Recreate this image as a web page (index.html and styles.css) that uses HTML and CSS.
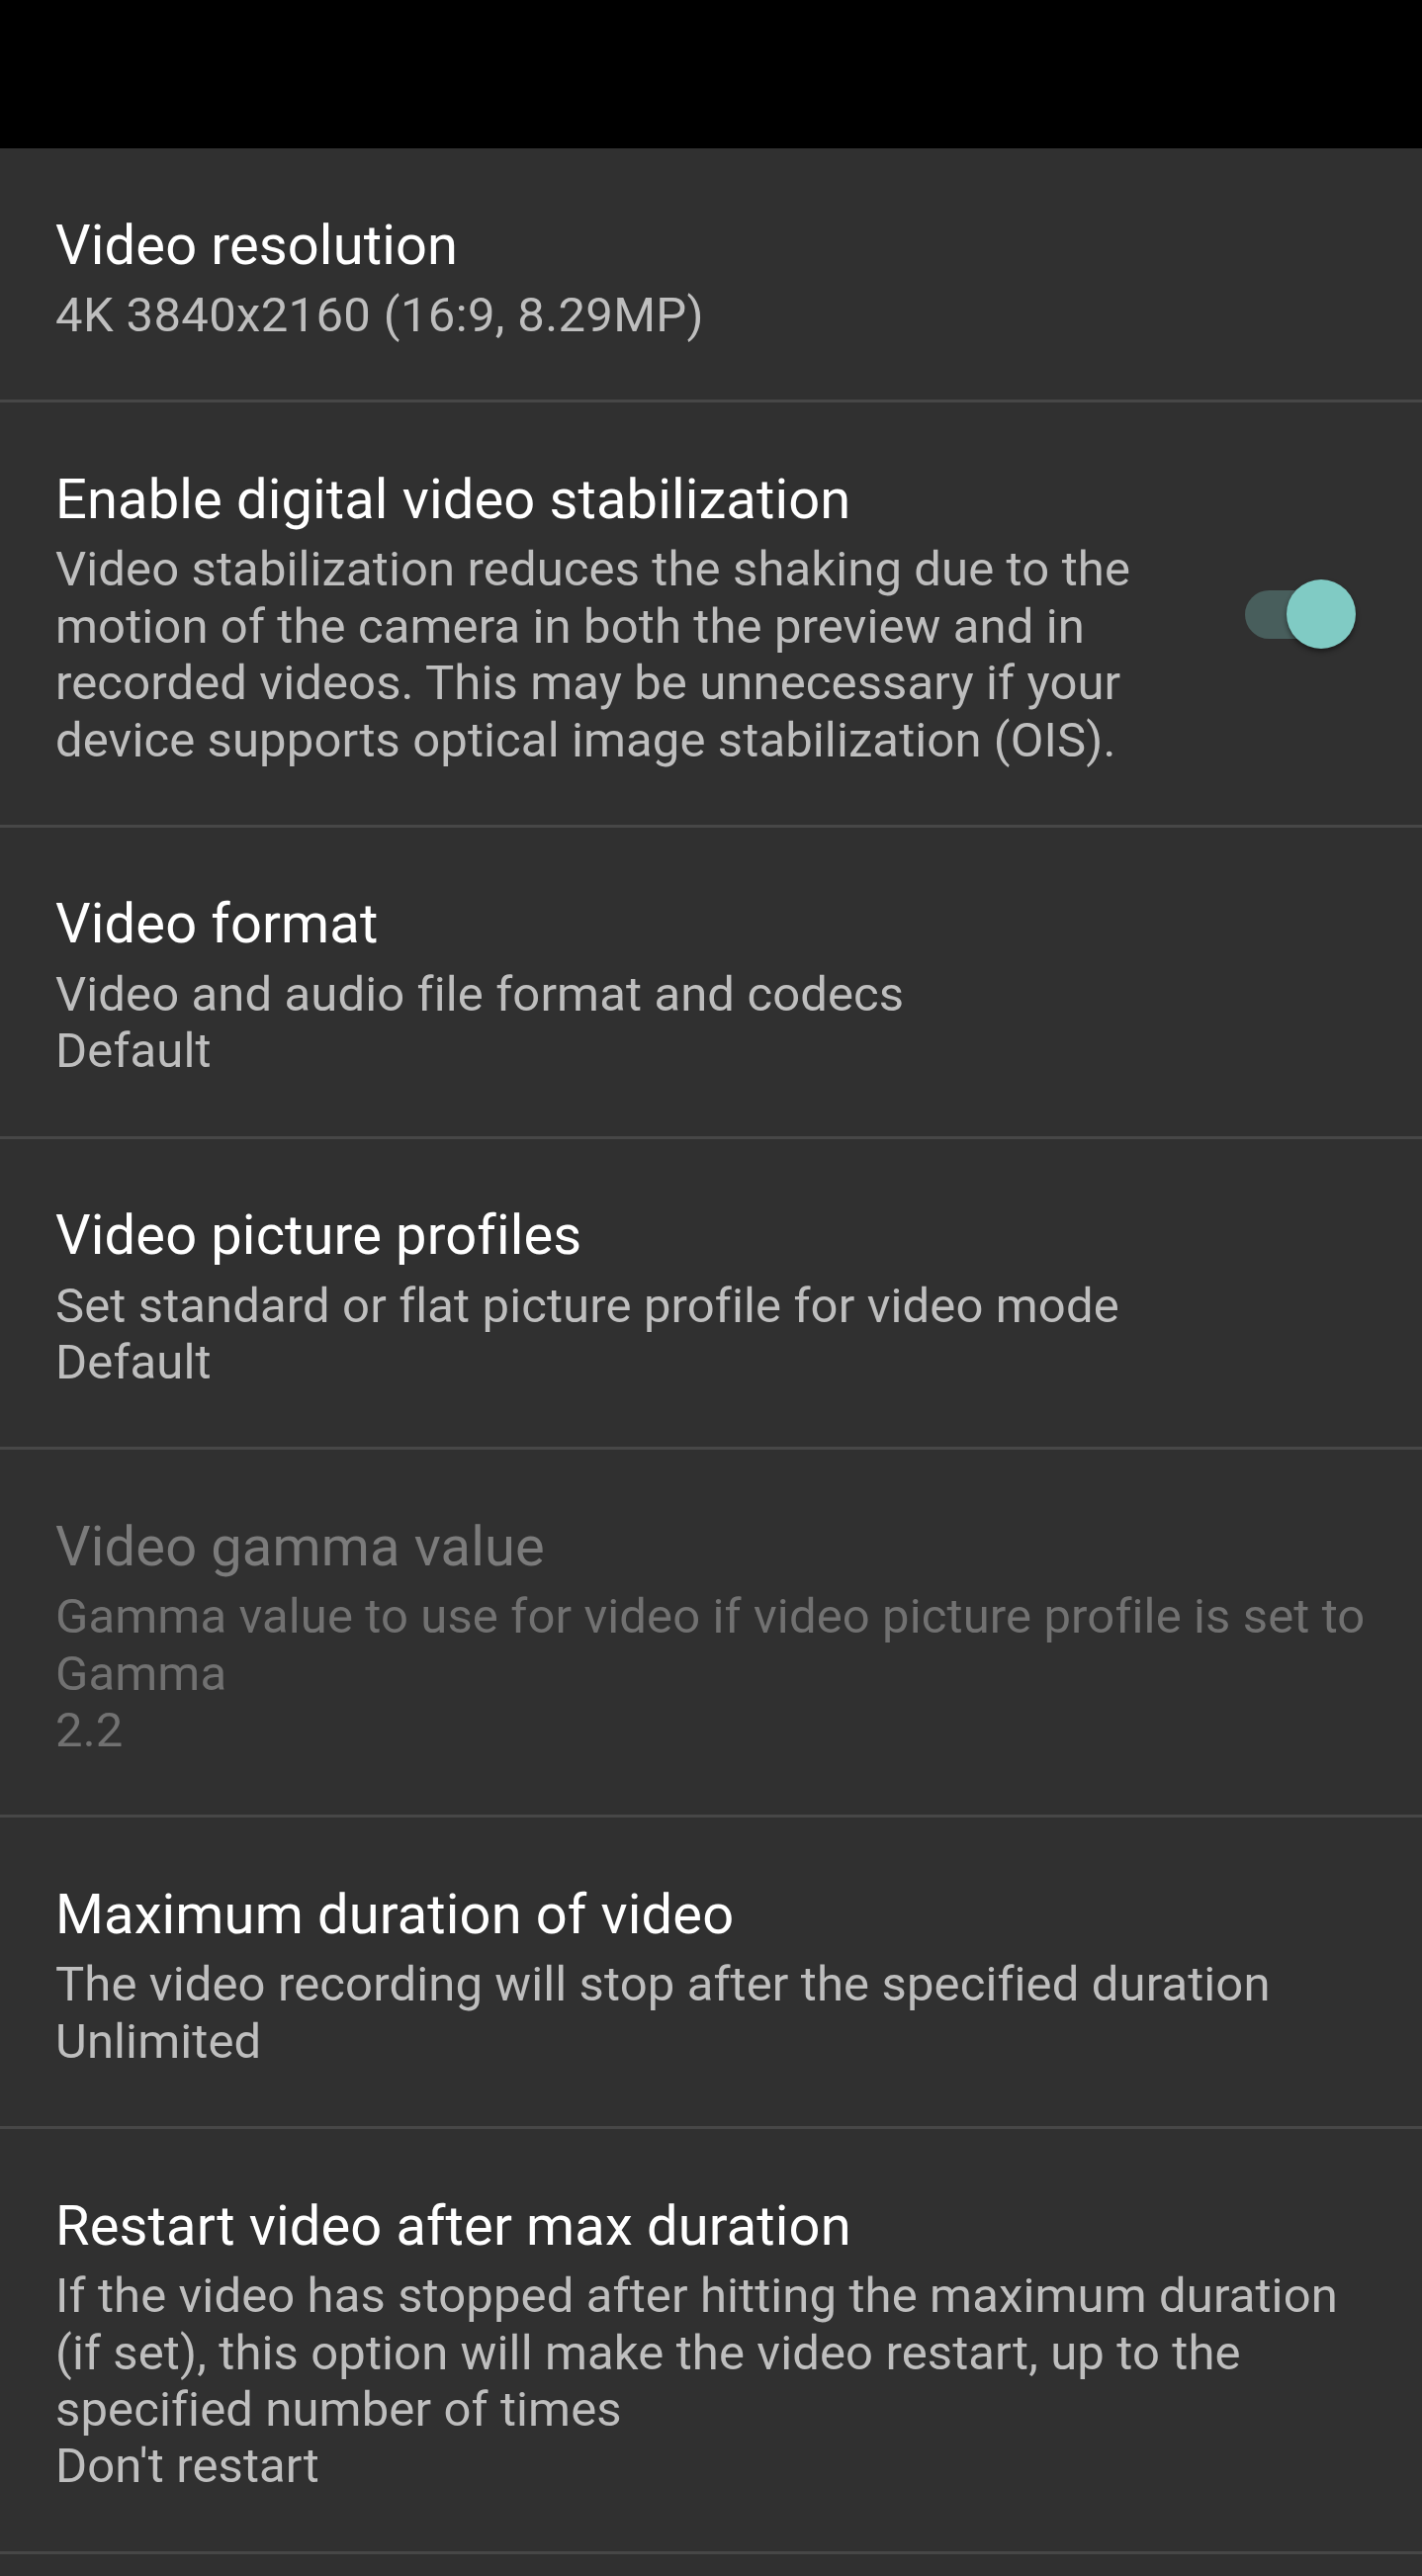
FILE: index.html
```html
<!DOCTYPE html>
<html lang="en">
<head>
<meta charset="utf-8">
<title>Video settings</title>
<link rel="stylesheet" href="styles.css">
</head>
<body>
<div class="status-bar"></div>
<main class="pref-list">
  <div class="pref">
    <div class="pref-text">
      <div class="pref-title">Video resolution</div>
      <div class="pref-summary pref-summary-numeric">4K 3840x2160 (16:9, 8.29MP)</div>
    </div>
  </div>
  <div class="pref">
    <div class="pref-text pref-text-widget">
      <div class="pref-title">Enable digital video stabilization</div>
      <div class="pref-summary">Video stabilization reduces the shaking due to the motion of the camera in both the preview and in recorded videos. This may be unnecessary if your device supports optical image stabilization (OIS).</div>
    </div>
    <div class="switch">
      <div class="switch-track"></div>
      <div class="switch-thumb"></div>
    </div>
  </div>
  <div class="pref">
    <div class="pref-text">
      <div class="pref-title">Video format</div>
      <div class="pref-summary">Video and audio file format and codecs<br>Default</div>
    </div>
  </div>
  <div class="pref">
    <div class="pref-text">
      <div class="pref-title">Video picture profiles</div>
      <div class="pref-summary">Set standard or flat picture profile for video mode<br>Default</div>
    </div>
  </div>
  <div class="pref pref-disabled">
    <div class="pref-text">
      <div class="pref-title">Video gamma value</div>
      <div class="pref-summary">Gamma value to use for video if video picture profile is set to Gamma<br>2.2</div>
    </div>
  </div>
  <div class="pref">
    <div class="pref-text">
      <div class="pref-title">Maximum duration of video</div>
      <div class="pref-summary">The video recording will stop after the specified duration<br>Unlimited</div>
    </div>
  </div>
  <div class="pref">
    <div class="pref-text">
      <div class="pref-title">Restart video after max duration</div>
      <div class="pref-summary">If the video has stopped after hitting the maximum duration (if set), this option will make the video restart, up to the specified number of times<br>Don't restart</div>
    </div>
  </div>
</main>
</body>
</html>
```

FILE: styles.css
```css
html, body {
  margin: 0;
  padding: 0;
  background: #303030;
}

body {
  font-family: Roboto, "Liberation Sans", sans-serif;
  min-height: 2605px;
}

.status-bar {
  height: 150px;
  background: #000000;
}

.pref-list {
  display: flex;
  flex-direction: column;
}

.pref {
  display: flex;
  align-items: center;
  padding: 65.5px 56px 56.8px 56px;
  border-bottom: 3px solid #474747;
}

.pref-text {
  flex: 1;
  min-width: 0;
}

.pref-text-widget {
  margin-right: 60px;
}

.pref-title {
  font-size: 56px;
  line-height: 65.6px;
  letter-spacing: 0.15px;
  color: #ffffff;
}

.pref-summary {
  margin-top: 9px;
  font-size: 49px;
  line-height: 57.4px;
  letter-spacing: 0.12px;
  color: #bebebe;
}

.pref-summary-numeric {
  letter-spacing: 0.35px;
}

.pref-disabled .pref-title {
  color: #7b7b7b;
}

.pref-disabled .pref-summary {
  color: #717171;
}

.switch {
  position: relative;
  flex: none;
  width: 112px;
  height: 70px;
  margin-right: 11px;
  margin-bottom: 8px;
}

.switch-track {
  position: absolute;
  left: 0;
  top: 11px;
  width: 101px;
  height: 49px;
  border-radius: 24.5px;
  background: #485e5c;
}

.switch-thumb {
  position: absolute;
  right: 0;
  top: 0;
  width: 70px;
  height: 70px;
  border-radius: 50%;
  background: #80cbc4;
  box-shadow: 0 3px 5px rgba(0, 0, 0, 0.45);
}
```
